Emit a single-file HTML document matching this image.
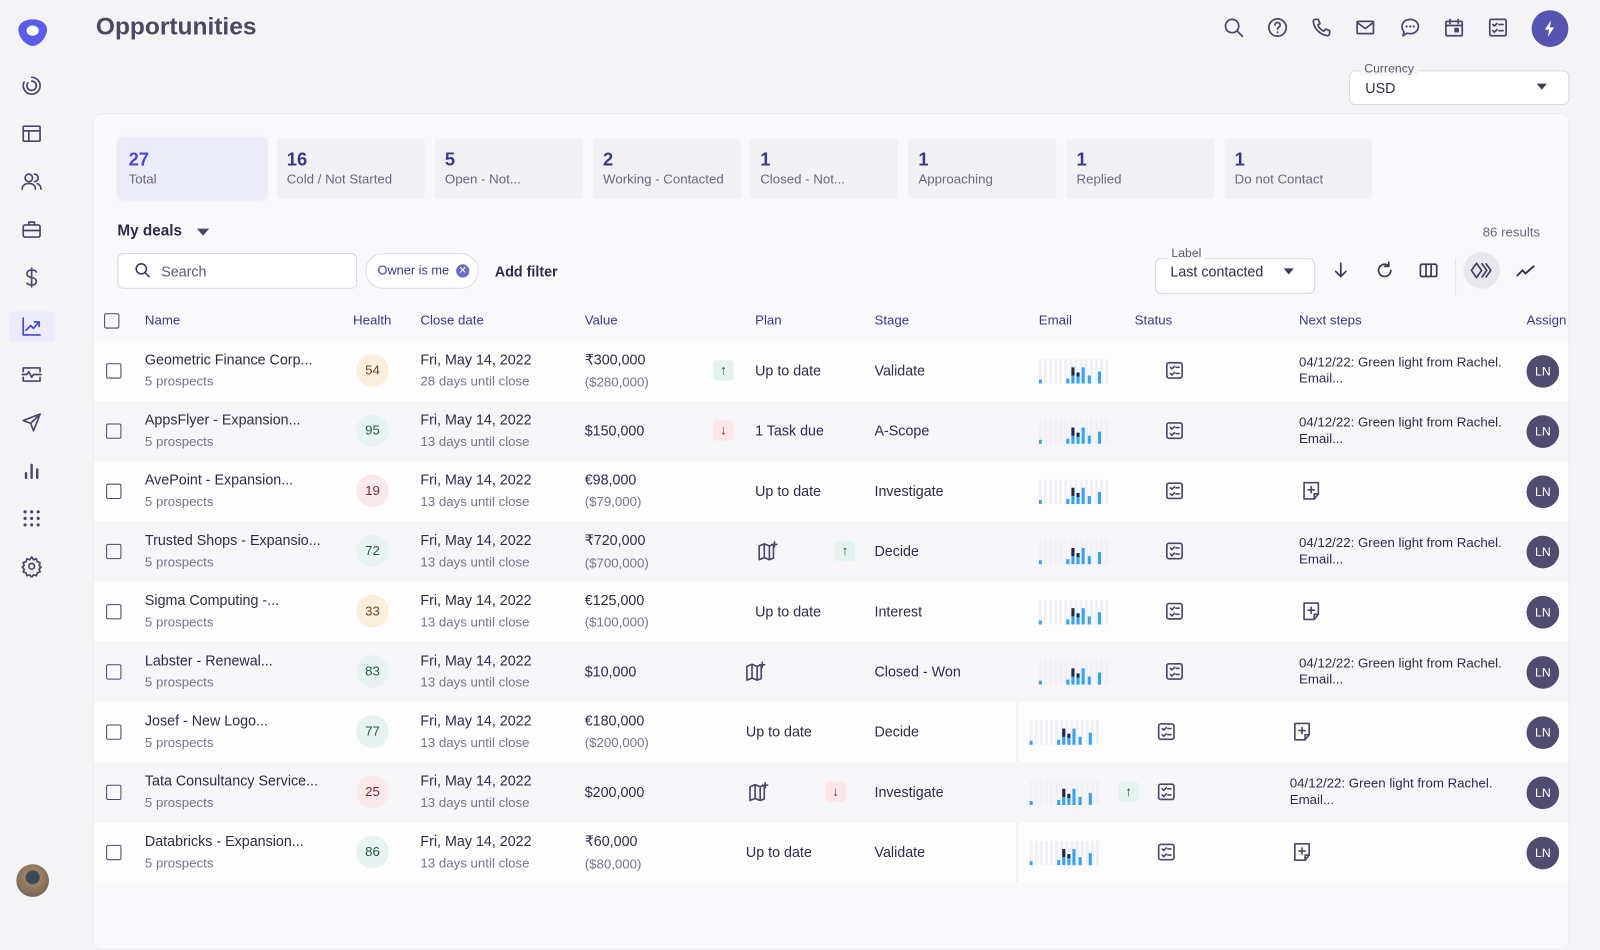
<!DOCTYPE html>
<html><head><meta charset="utf-8"><style>
*{box-sizing:border-box;margin:0;padding:0}
html,body{width:1600px;height:920px;overflow:hidden}
body{background:#f4f3f6;font-family:"Liberation Sans",sans-serif;color:#2e2c4a}
#w{position:absolute;left:0;top:0;width:1568px;height:902px;transform:scale(1.0204);transform-origin:0 0}
.a{position:absolute}
.side svg{position:absolute;left:20px;width:22px;height:22px;fill:none;stroke:#4a4868;stroke-width:1.8;stroke-linecap:round;stroke-linejoin:round}
.top svg{position:absolute;top:17px;width:20px;height:20px;fill:none;stroke:#4a4868;stroke-width:1.7;stroke-linecap:round;stroke-linejoin:round}
.card{left:91px;top:111px;width:1447px;height:820px;background:#f9f9fb;border:1px solid #ebeaf0;border-radius:8px}
.tile{top:136px;width:145px;height:59px;background:#f1f1f4;border-radius:3px;padding:10px}
.tile b{display:block;font-size:18px;color:#3b3791;font-weight:bold}
.tile span{font-size:13px;color:#6a6883}
.th{top:306px;font-size:13px;color:#3b3791}
.row{width:1445px;height:59px}
.row:nth-child(even){background:#f6f6f9}
.row:nth-child(odd){background:#fdfdfe}
.cb{left:12px;top:22px;width:15px;height:15px;border:1.5px solid #4a4868;border-radius:2px}
.nm{left:50px;top:10px;font-size:14px;color:#2e2c4a}
.sub{font-size:13px;color:#76748c;margin-top:6px}
.hb{left:257px;top:13px;width:32px;height:32px;border-radius:50%;font-size:13px;text-align:center;line-height:32px}
.o{background:#fbeedd;color:#6b4a22}.g{background:#e6f3f0;color:#2a5a4b}.r{background:#fbe8ea;color:#7a2c34}
.cd{left:320px;top:10px;font-size:14px}
.vl{left:481px;font-size:14px}
.ab{width:20px;height:20px;border-radius:3px;text-align:center;line-height:20px;font-size:13px;top:19px}
.up{background:#e4f3ef;color:#1e5a46}.dn{background:#fbe6e8;color:#8a2a32}
.tx{font-size:14px;top:21px}
.sp{top:16px;width:72px;height:26px}
.st{top:20px;width:18px;height:18px}
.ns{font-size:13px;top:13px;line-height:16px;color:#2e2c4a}
.av{left:1404px;top:14px;width:32px;height:32px;border-radius:50%;background:#4f4c70;color:#fff;font-size:12px;text-align:center;line-height:32px}
</style></head><body><div id="w">
<svg width="0" height="0" style="position:absolute">
<defs>
<symbol id="sp" viewBox="0 0 72 26">
<g fill="#f0f0f5"><rect x="0" y="2" width="3" height="24"/><rect x="5" y="2" width="3" height="24"/><rect x="10" y="2" width="3" height="24"/><rect x="15" y="2" width="3" height="24"/><rect x="20" y="2" width="3" height="24"/><rect x="25" y="2" width="3" height="24"/><rect x="30" y="2" width="3" height="24"/><rect x="35" y="2" width="3" height="24"/><rect x="40" y="2" width="3" height="24"/><rect x="45" y="2" width="3" height="24"/><rect x="50" y="2" width="3" height="24"/><rect x="55" y="2" width="3" height="24"/><rect x="60" y="2" width="3" height="24"/><rect x="65" y="2" width="3" height="24"/></g>
<g fill="#35a3f5"><rect x="0" y="22" width="3" height="4"/><rect x="27" y="21" width="3" height="5"/><rect x="32" y="12" width="3" height="14"/><rect x="37" y="18" width="3" height="8"/><rect x="42" y="10" width="3" height="16"/><rect x="48" y="18" width="3" height="8"/><rect x="58" y="14" width="3" height="12"/></g>
<g fill="#1c2a4a"><rect x="32" y="10" width="3" height="8"/><rect x="37" y="15" width="3" height="4"/></g>
</symbol>
<symbol id="st" viewBox="0 0 18 18"><g fill="none" stroke="#4a4868" stroke-width="1.6" stroke-linecap="round"><rect x="1.5" y="1.5" width="15" height="15" rx="2"/><path d="M5 6l1.5 1.5L9 5M10.5 6h3M5 12l1.5 1.5L9 11M10.5 12h3"/></g></symbol>
<symbol id="nt" viewBox="0 0 20 20"><g fill="none" stroke="#4a4868" stroke-width="1.6" stroke-linejoin="round" stroke-linecap="round"><path d="M3 2h14v11l-4 5H3z"/><path d="M13 18v-5h4M10 6v6M7 9h6"/></g></symbol>
<symbol id="mp" viewBox="0 0 20 20"><g fill="none" stroke="#4a4868" stroke-width="1.6" stroke-linejoin="round" stroke-linecap="round"><path d="M2 5l5-2 5 2 4-1.5V17l-4 1.5-5-2-5 2z M7 3v13.5 M12 5v13.5 M17 1v5 M14.5 3.5h5"/></g></symbol>
</defs></svg>

<div class="side">
<svg class="a" style="left:17px;top:18px;width:30px;height:28px" viewBox="0 0 30 28"><path d="M15 1C7 1 1 5 1 11c0 8 8 16 14 16s14-8 14-16C29 5 23 1 15 1z" fill="#5b5bf0" stroke="none"/><ellipse cx="15" cy="12" rx="6" ry="5" fill="#fff" stroke="none"/></svg>
<svg style="top:73px" viewBox="0 0 24 24"><path d="M12 3a9 9 0 1 1-8 5M12 7a5 5 0 1 1-4 2"/></svg>
<svg style="top:120px" viewBox="0 0 24 24"><rect x="3" y="4" width="18" height="16" rx="1"/><path d="M3 9h18M9 9v11"/></svg>
<svg style="top:167px" viewBox="0 0 24 24"><circle cx="9" cy="8" r="4"/><path d="M2 20c0-4 3-6 7-6s7 2 7 6M15 4a4 4 0 0 1 0 8M18 14c2 1 4 3 4 6"/></svg>
<svg style="top:214px" viewBox="0 0 24 24"><rect x="3" y="7" width="18" height="13" rx="2"/><path d="M9 7V4h6v3M3 13h18"/></svg>
<svg style="top:261px" viewBox="0 0 24 24"><path d="M12 2v20M17 6c-1-1.5-3-2-5-2-3 0-5 1.5-5 4s2 3.5 5 4 5 1.5 5 4-2 4-5 4c-2 0-4-.7-5-2"/></svg>
<div class="a" style="left:9px;top:305px;width:45px;height:30px;background:#ebebfb;border-radius:4px"></div>
<svg style="top:309px;stroke:#4a45e0" viewBox="0 0 24 24"><path d="M3 3v18h18M6 16l5-5 3 3 6-7M15 7h5v5"/></svg>
<svg style="top:356px" viewBox="0 0 24 24"><path d="M3 9V5h18v4M3 15v4h18v-4M2 12h5l2-3 3 6 2-3h8"/></svg>
<svg style="top:403px" viewBox="0 0 24 24"><path d="M21 3L3 10l8 3 3 8z M11 13l10-10"/></svg>
<svg style="top:450px" viewBox="0 0 24 24"><path d="M6 20v-5M12 20V6M18 20v-9" stroke-width="2.6"/></svg>
<svg style="top:497px" viewBox="0 0 24 24"><g stroke-width="3.4"><path d="M5 5h0M12 5h0M19 5h0M5 12h0M12 12h0M19 12h0M5 19h0M12 19h0M19 19h0"/></g></svg>
<svg style="top:544px" viewBox="0 0 24 24"><circle cx="12" cy="12" r="3"/><path d="M12 2l2 3 3-1 1 3 3 1-1 3 2 2-2 2 1 3-3 1-1 3-3-1-2 3-2-3-3 1-1-3-3-1 1-3-2-2 2-2-1-3 3-1 1-3 3 1z"/></svg>
<div class="a" style="left:16px;top:847px;width:32px;height:32px;border-radius:50%;background:radial-gradient(circle at 50% 40%,#3a4a5a 0 25%,#a08060 30%,#7a6a5a 70%)"></div>
</div>

<div class="a" style="left:94px;top:13px;font-size:24px;font-weight:bold;color:#4a4862">Opportunities</div>

<div class="top">
<svg style="left:1199px" viewBox="0 0 20 20"><circle cx="8.5" cy="8.5" r="6.5"/><path d="M13.5 13.5l5 5"/></svg>
<svg style="left:1242px" viewBox="0 0 20 20"><circle cx="10" cy="10" r="8.5"/><path d="M7.5 7.5a2.5 2.5 0 1 1 3.5 2.3c-.7.4-1 .9-1 1.7M10 14.5v.3"/></svg>
<svg style="left:1285px" viewBox="0 0 20 20"><path d="M4 2h3l1.5 4-2 1.5a10 10 0 0 0 6 6l1.5-2 4 1.5v3a2 2 0 0 1-2 2A16 16 0 0 1 2 4a2 2 0 0 1 2-2z"/></svg>
<svg style="left:1328px" viewBox="0 0 20 20"><rect x="2" y="4" width="16" height="12" rx="1"/><path d="M2 5l8 6 8-6"/></svg>
<svg style="left:1372px" viewBox="0 0 20 20"><path d="M10 2c4.5 0 8 3 8 7s-3.5 7-8 7c-1 0-2-.1-3-.5L3 18l1-3.5C2.8 13 2 11 2 9c0-4 3.5-7 8-7z"/><path d="M6.5 9h0M10 9h0M13.5 9h0" stroke-width="2.2"/></svg>
<svg style="left:1415px" viewBox="0 0 20 20"><rect x="2" y="4" width="16" height="14" rx="1"/><path d="M2 8h16M6 2v4M14 2v4"/><rect x="11" y="11" width="3" height="3" fill="#4a4868"/></svg>
<svg style="left:1458px" viewBox="0 0 20 20"><rect x="2" y="2" width="16" height="16" rx="1.5"/><path d="M5 7l1.5 1.5L9 6M11 7h4M5 13l1.5 1.5L9 12M11 13h4"/></svg>
</div>
<div class="a" style="left:1501px;top:10px;width:36px;height:36px;border-radius:50%;background:#5554b0"></div>
<svg class="a" style="left:1511px;top:19px" width="16" height="18" viewBox="0 0 16 18"><path d="M9 1L3 10h4l-1 7 6-9H8z" fill="#fff"/></svg>

<div class="a" style="left:1322px;top:69px;width:216px;height:34px;border:1px solid #d8d7e2;border-radius:6px;background:#fff"></div>
<div class="a" style="left:1333px;top:60px;padding:0 4px;background:#f4f3f6;font-size:12px;color:#5a5872">Currency</div>
<div class="a" style="left:1338px;top:78px;font-size:14px">USD</div>
<div class="a" style="left:1506px;top:82px;border:5px solid transparent;border-top:6px solid #3e3c5a;border-bottom:0"></div>

<div class="a card"></div>
<div class="a tile" style="left:116px;background:#ecebf8;box-shadow:0 0 3px #d8d7ef"><b style="color:#4a45e0">27</b><span>Total</span></div>
<div class="a tile" style="left:271px"><b>16</b><span>Cold / Not Started</span></div>
<div class="a tile" style="left:426px"><b>5</b><span>Open - Not...</span></div>
<div class="a tile" style="left:581px"><b>2</b><span>Working - Contacted</span></div>
<div class="a tile" style="left:735px"><b>1</b><span>Closed - Not...</span></div>
<div class="a tile" style="left:890px"><b>1</b><span>Approaching</span></div>
<div class="a tile" style="left:1045px"><b>1</b><span>Replied</span></div>
<div class="a tile" style="left:1200px"><b>1</b><span>Do not Contact</span></div>

<div class="a" style="left:115px;top:218px;font-size:15px;font-weight:bold;color:#2e2c4a">My deals</div>
<div class="a" style="left:193px;top:224px;border:6px solid transparent;border-top:7px solid #4a4868;border-bottom:0"></div>
<div class="a" style="left:1453px;top:220px;font-size:13px;color:#6a6883">86 results</div>

<div class="a" style="left:115px;top:248px;width:235px;height:35px;background:#fff;border:1px solid #d8d7e2;border-radius:6px"></div>
<svg class="a" style="left:132px;top:257px" width="16" height="16" viewBox="0 0 16 16"><g fill="none" stroke="#3e3c5a" stroke-width="1.6"><circle cx="6.5" cy="6.5" r="5"/><path d="M10.5 10.5l4 4"/></g></svg>
<div class="a" style="left:158px;top:258px;font-size:14px;color:#5a5872">Search</div>
<div class="a" style="left:358px;top:248px;width:111px;height:35px;background:#fff;border:1px solid #dcdbe8;border-radius:18px"></div>
<div class="a" style="left:370px;top:258px;font-size:12.5px;color:#3b3791">Owner is me</div>
<div class="a" style="left:447px;top:259px;width:13px;height:13px;border-radius:50%;background:#6f6cc8;color:#fff;font-size:10px;text-align:center;line-height:13px">✕</div>
<div class="a" style="left:485px;top:258px;font-size:14px;color:#2e2c4a;font-weight:bold">Add filter</div>

<div class="a" style="left:1132px;top:253px;width:157px;height:35px;border:1px solid #d8d7e2;border-radius:6px;background:#fff"></div>
<div class="a" style="left:1144px;top:241px;padding:0 4px;background:#f9f9fb;font-size:12px;color:#5a5872">Label</div>
<div class="a" style="left:1147px;top:258px;font-size:14px">Last contacted</div>
<div class="a" style="left:1258px;top:263px;border:5px solid transparent;border-top:6px solid #3e3c5a;border-bottom:0"></div>
<svg class="a" style="left:1304px;top:255px" width="20" height="20" viewBox="0 0 20 20"><path d="M10 3v13M5 11l5 5 5-5" fill="none" stroke="#3e3c5a" stroke-width="1.7" stroke-linecap="round"/></svg>
<svg class="a" style="left:1347px;top:255px" width="20" height="20" viewBox="0 0 20 20"><path d="M16 10a6 6 0 1 1-2-4.5M14 2v4h-4" fill="none" stroke="#3e3c5a" stroke-width="1.7" stroke-linecap="round"/></svg>
<svg class="a" style="left:1390px;top:255px" width="20" height="20" viewBox="0 0 20 20"><g fill="none" stroke="#3e3c5a" stroke-width="1.7"><rect x="2" y="4" width="16" height="12" rx="1.5"/><path d="M7.5 4v12M12.5 4v12"/></g></svg>
<div class="a" style="left:1426px;top:253px;width:1px;height:36px;background:#e4e3ea"></div>
<div class="a" style="left:1434px;top:247px;width:36px;height:36px;border-radius:50%;background:#e8e7ee"></div>
<svg class="a" style="left:1441px;top:255px" width="22" height="20" viewBox="0 0 22 20"><path d="M6 3L1 10l5 7 5-7zM11 3l5 7-5 7M15 3l5 7-5 7" fill="none" stroke="#3e3c5a" stroke-width="1.6" stroke-linejoin="round"/></svg>
<svg class="a" style="left:1485px;top:255px" width="20" height="20" viewBox="0 0 20 20"><path d="M2 15l5-5 3 3 8-7" fill="none" stroke="#2e2c4a" stroke-width="1.8" stroke-linecap="round"/></svg>

<div class="a" style="left:102px;top:307px;width:15px;height:15px;border:1.5px solid #4a4868;border-radius:2px"></div>
<div class="a th" style="left:142px">Name</div>
<div class="a th" style="left:346px">Health</div>
<div class="a th" style="left:412px">Close date</div>
<div class="a th" style="left:573px">Value</div>
<div class="a th" style="left:740px">Plan</div>
<div class="a th" style="left:857px">Stage</div>
<div class="a th" style="left:1018px">Email</div>
<div class="a th" style="left:1112px">Status</div>
<div class="a th" style="left:1273px">Next steps</div>
<div class="a th" style="left:1496px">Assign</div>

<div class="a" style="left:92px;top:334px;width:1445px;overflow:hidden">
<div class="row" style="position:relative">
<div class="a cb"></div><div class="a nm">Geometric Finance Corp...<div class="sub">5 prospects</div></div>
<div class="a hb o">54</div><div class="a cd">Fri, May 14, 2022<div class="sub">28 days until close</div></div>
<div class="a vl" style="top:10px">₹300,000<div class="sub">($280,000)</div></div>
<div class="a ab up" style="left:607px">↑</div><div class="a tx" style="left:648px">Up to date</div><div class="a tx" style="left:765px">Validate</div>
<svg class="a sp" style="left:926px"><use href="#sp"/></svg><svg class="a st" style="left:1050px"><use href="#st"/></svg>
<div class="a ns" style="left:1181px">04/12/22: Green light from Rachel.<br>Email...</div><div class="a av">LN</div></div>
<div class="row" style="position:relative">
<div class="a cb"></div><div class="a nm">AppsFlyer - Expansion...<div class="sub">5 prospects</div></div>
<div class="a hb g">95</div><div class="a cd">Fri, May 14, 2022<div class="sub">13 days until close</div></div>
<div class="a vl tx">$150,000</div>
<div class="a ab dn" style="left:607px">↓</div><div class="a tx" style="left:648px">1 Task due</div><div class="a tx" style="left:765px">A-Scope</div>
<svg class="a sp" style="left:926px"><use href="#sp"/></svg><svg class="a st" style="left:1050px"><use href="#st"/></svg>
<div class="a ns" style="left:1181px">04/12/22: Green light from Rachel.<br>Email...</div><div class="a av">LN</div></div>
<div class="row" style="position:relative">
<div class="a cb"></div><div class="a nm">AvePoint - Expansion...<div class="sub">5 prospects</div></div>
<div class="a hb r">19</div><div class="a cd">Fri, May 14, 2022<div class="sub">13 days until close</div></div>
<div class="a vl" style="top:10px">€98,000<div class="sub">($79,000)</div></div>
<div class="a tx" style="left:648px">Up to date</div><div class="a tx" style="left:765px">Investigate</div>
<svg class="a sp" style="left:926px"><use href="#sp"/></svg><svg class="a st" style="left:1050px"><use href="#st"/></svg>
<svg class="a" style="left:1183px;top:19px;width:20px;height:20px"><use href="#nt"/></svg><div class="a av">LN</div></div>
<div class="row" style="position:relative">
<div class="a cb"></div><div class="a nm">Trusted Shops - Expansio...<div class="sub">5 prospects</div></div>
<div class="a hb g">72</div><div class="a cd">Fri, May 14, 2022<div class="sub">13 days until close</div></div>
<div class="a vl" style="top:10px">₹720,000<div class="sub">($700,000)</div></div>
<svg class="a" style="left:650px;top:19px;width:20px;height:20px"><use href="#mp"/></svg><div class="a ab up" style="left:726px">↑</div><div class="a tx" style="left:765px">Decide</div>
<svg class="a sp" style="left:926px"><use href="#sp"/></svg><svg class="a st" style="left:1050px"><use href="#st"/></svg>
<div class="a ns" style="left:1181px">04/12/22: Green light from Rachel.<br>Email...</div><div class="a av">LN</div></div>
<div class="row" style="position:relative">
<div class="a cb"></div><div class="a nm">Sigma Computing -...<div class="sub">5 prospects</div></div>
<div class="a hb o">33</div><div class="a cd">Fri, May 14, 2022<div class="sub">13 days until close</div></div>
<div class="a vl" style="top:10px">€125,000<div class="sub">($100,000)</div></div>
<div class="a tx" style="left:648px">Up to date</div><div class="a tx" style="left:765px">Interest</div>
<svg class="a sp" style="left:926px"><use href="#sp"/></svg><svg class="a st" style="left:1050px"><use href="#st"/></svg>
<svg class="a" style="left:1183px;top:19px;width:20px;height:20px"><use href="#nt"/></svg><div class="a av">LN</div></div>
<div class="row" style="position:relative">
<div class="a cb"></div><div class="a nm">Labster - Renewal...<div class="sub">5 prospects</div></div>
<div class="a hb g">83</div><div class="a cd">Fri, May 14, 2022<div class="sub">13 days until close</div></div>
<div class="a vl tx">$10,000</div>
<svg class="a" style="left:638px;top:19px;width:20px;height:20px"><use href="#mp"/></svg><div class="a tx" style="left:765px">Closed - Won</div>
<svg class="a sp" style="left:926px"><use href="#sp"/></svg><svg class="a st" style="left:1050px"><use href="#st"/></svg>
<div class="a ns" style="left:1181px">04/12/22: Green light from Rachel.<br>Email...</div><div class="a av">LN</div></div>
<div class="row" style="position:relative">
<div class="a cb"></div><div class="a nm">Josef - New Logo...<div class="sub">5 prospects</div></div>
<div class="a hb g">77</div><div class="a cd">Fri, May 14, 2022<div class="sub">13 days until close</div></div>
<div class="a vl" style="top:10px">€180,000<div class="sub">($200,000)</div></div>
<div class="a tx" style="left:639px">Up to date</div><div class="a tx" style="left:765px">Decide</div>
<div class="a" style="left:904px;top:0;width:2px;height:59px;background:#f0f0f4"></div>
<svg class="a sp" style="left:917px"><use href="#sp"/></svg><svg class="a st" style="left:1042px"><use href="#st"/></svg>
<svg class="a" style="left:1174px;top:19px;width:20px;height:20px"><use href="#nt"/></svg><div class="a av">LN</div></div>
<div class="row" style="position:relative">
<div class="a cb"></div><div class="a nm">Tata Consultancy Service...<div class="sub">5 prospects</div></div>
<div class="a hb r">25</div><div class="a cd">Fri, May 14, 2022<div class="sub">13 days until close</div></div>
<div class="a vl tx">$200,000</div>
<svg class="a" style="left:641px;top:19px;width:20px;height:20px"><use href="#mp"/></svg><div class="a ab dn" style="left:717px">↓</div><div class="a tx" style="left:765px">Investigate</div>
<svg class="a sp" style="left:917px"><use href="#sp"/></svg><div class="a ab up" style="left:1004px">↑</div><svg class="a st" style="left:1042px"><use href="#st"/></svg>
<div class="a ns" style="left:1172px">04/12/22: Green light from Rachel.<br>Email...</div><div class="a av">LN</div></div>
<div class="row" style="position:relative">
<div class="a cb"></div><div class="a nm">Databricks - Expansion...<div class="sub">5 prospects</div></div>
<div class="a hb g">86</div><div class="a cd">Fri, May 14, 2022<div class="sub">13 days until close</div></div>
<div class="a vl" style="top:10px">₹60,000<div class="sub">($80,000)</div></div>
<div class="a tx" style="left:639px">Up to date</div><div class="a tx" style="left:765px">Validate</div>
<div class="a" style="left:904px;top:0;width:2px;height:59px;background:#f0f0f4"></div>
<svg class="a sp" style="left:917px"><use href="#sp"/></svg><svg class="a st" style="left:1042px"><use href="#st"/></svg>
<svg class="a" style="left:1174px;top:19px;width:20px;height:20px"><use href="#nt"/></svg><div class="a av">LN</div></div>
</div>
</div></body></html>
